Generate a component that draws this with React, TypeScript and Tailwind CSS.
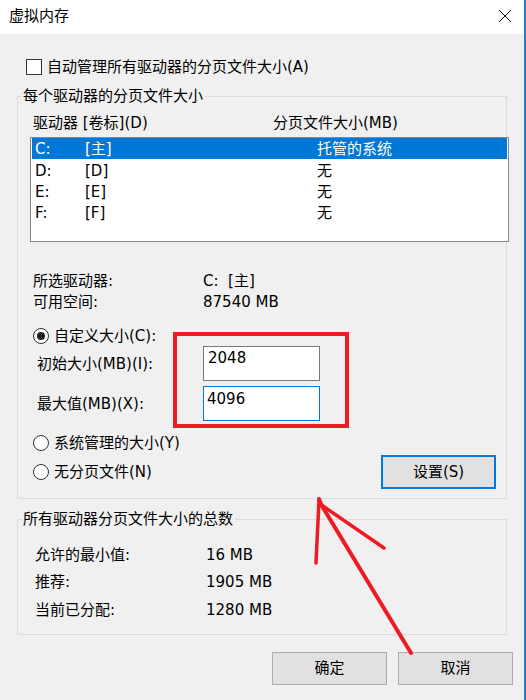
const drives = [
  { drive: 'C:', label: '[主]', size: '托管的系统', selected: true },
  { drive: 'D:', label: '[D]', size: '无', selected: false },
  { drive: 'E:', label: '[E]', size: '无', selected: false },
  { drive: 'F:', label: '[F]', size: '无', selected: false },
];

const totals = [
  { label: '允许的最小值:', value: '16 MB' },
  { label: '推荐:', value: '1905 MB' },
  { label: '当前已分配:', value: '1280 MB' },
];

const Radio = ({ checked, label }: { checked?: boolean; label: string }) => (
  <div className="flex items-center h-[20px]">
    <span className="w-[16px] h-[16px] rounded-full border border-[#333333] bg-white flex items-center justify-center">
      {checked && <span className="w-[8px] h-[8px] rounded-full bg-[#222222]" />}
    </span>
    <span className="ml-[5px]">{label}</span>
  </div>
);

const App = () => {
  return (
    <div className="relative w-[526px] h-[700px] overflow-hidden bg-[#f0f0f0] border-r-2 border-[#1a7fd6] text-[15px] leading-[20px] text-black font-['DejaVu_Sans','Noto_Sans_CJK_SC',sans-serif]">
      {/* title bar */}
      <div className="h-[34px] bg-white flex items-center justify-between pl-[9px] pr-[12px]">
        <span className="-mt-[2px]">虚拟内存</span>
        <svg width="14" height="14" viewBox="0 0 14 14" className="-mt-[2px]">
          <path d="M1 1 L13 13 M13 1 L1 13" stroke="#111" strokeWidth="1" fill="none" />
        </svg>
      </div>

      <div className="pl-[17px]">
        <div className="flex items-center h-[20px] mt-[23px] ml-[9px]">
          <span className="w-[16px] h-[16px] border border-[#333333] bg-white" />
          <span className="ml-[5px]">自动管理所有驱动器的分页文件大小(A)</span>
        </div>

        {/* per-drive group */}
        <fieldset className="mt-[9px] w-[490px] min-w-0 border border-[#dcdcdc] p-0 pb-[9px]">
          <legend className="ml-[3px] px-[2px] leading-[20px]">每个驱动器的分页文件大小</legend>
          <div className="pl-[12px] pr-[10px] pt-[7px]">
            <div className="flex pl-[3px]">
              <span className="w-[240px]">驱动器 [卷标](D)</span>
              <span>分页文件大小(MB)</span>
            </div>

            <div className="mt-[4px] w-[479px] h-[105px] border border-[#828790] bg-white px-[1px]">
              {drives.map(d => (
                <div
                  key={d.drive}
                  className={`flex items-center h-[21px] pl-[3px] ${d.selected ? 'bg-[#0078d7] text-white h-[20px] mb-[1px]' : ''}`}
                >
                  <span className="w-[50px]">{d.drive}</span>
                  <span className="w-[232px]">{d.label}</span>
                  <span>{d.size}</span>
                </div>
              ))}
            </div>

            <div className="mt-[29px] pl-[3px] leading-[21px]">
              <div className="flex">
                <span className="w-[170px]">所选驱动器:</span>
                <span>C:&nbsp;&nbsp;[主]</span>
              </div>
              <div className="flex">
                <span className="w-[170px]">可用空间:</span>
                <span>87540 MB</span>
              </div>
            </div>

            <div className="mt-[13px] pl-[3px]">
              <Radio checked label="自定义大小(C):" />
            </div>

            <div className="flex items-center">
              <span className="w-[173px] pl-[7px]">初始大小(MB)(I):</span>
              <div className="w-[117px] h-[35px] border border-[#7a7a7a] bg-white pl-[4px] pt-[1px]">2048</div>
            </div>
            <div className="flex items-center mt-[5px]">
              <span className="w-[173px] pl-[7px]">最大值(MB)(X):</span>
              <div className="w-[117px] h-[35px] border border-[#0078d7] bg-white pl-[3px] pt-[2px]">4096</div>
            </div>

            <div className="mt-[12px] pl-[3px]">
              <Radio label="系统管理的大小(Y)" />
            </div>
            <div className="mt-[2px] pl-[3px] flex items-center justify-between">
              <Radio label="无分页文件(N)" />
              <button className="w-[115px] h-[34px] border-2 border-[#0078d7] bg-[#e1e1e1]">设置(S)</button>
            </div>
          </div>
        </fieldset>

        {/* totals group */}
        <fieldset className="mt-[10px] w-[490px] min-w-0 border border-[#dcdcdc] p-0 pb-[10px]">
          <legend className="ml-[3px] px-[2px] leading-[20px]">所有驱动器分页文件大小的总数</legend>
          <div className="pl-[17px] pt-[12px]">
            {totals.map(t => (
              <div key={t.label} className="flex items-center h-[27.5px]">
                <span className="w-[171px]">{t.label}</span>
                <span>{t.value}</span>
              </div>
            ))}
          </div>
        </fieldset>

        <div className="mt-[17px] w-[496px] flex justify-end gap-[11px]">
          <button className="w-[115px] h-[33px] border border-[#adadad] bg-[#e1e1e1]">确定</button>
          <button className="w-[115px] h-[33px] border border-[#adadad] bg-[#e1e1e1]">取消</button>
        </div>
      </div>

      {/* red annotation */}
      <div className="absolute left-[173px] top-[332px] w-[176px] h-[96px] border-4 border-[#ed1c24]" />
      <svg className="absolute left-0 top-0 pointer-events-none" width="526" height="700" viewBox="0 0 526 700">
        <g stroke="#ed1c24" strokeLinecap="round" fill="none">
          <path d="M319 499 L322 506 L411 653" strokeWidth="4" />
          <path d="M319 500 L316 563" strokeWidth="3.5" />
          <path d="M320 504 L384 548" strokeWidth="3.5" />
        </g>
      </svg>
    </div>
  );
};

export default App;
